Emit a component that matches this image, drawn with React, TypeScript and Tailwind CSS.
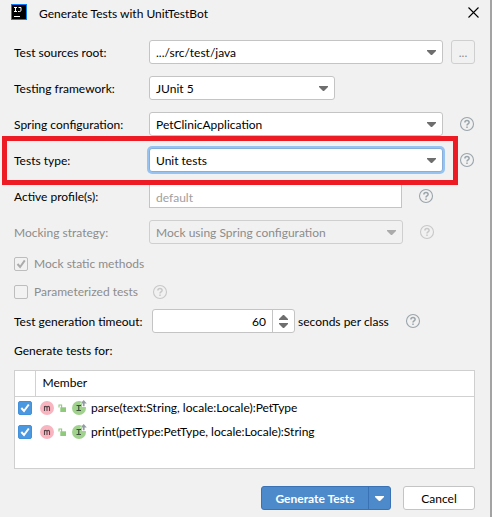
import type { ReactNode } from 'react';
import clsx from 'clsx';

function Arrow({ className }: { className?: string }) {
  return (
    <svg viewBox="0 0 9 5" className={clsx('h-[5px] w-[9px]', className)} fill="currentColor" aria-hidden="true">
      <path d="M0 0h9v1L5 5H4L0 1z" />
    </svg>
  );
}

function Help({ label, muted, className }: { label: string; muted?: boolean; className?: string }) {
  return (
    <button
      type="button"
      aria-label={label}
      className={clsx('size-[14px] shrink-0', muted ? 'text-[#c8c8c8]' : 'text-[#9aa5ab]', className)}
    >
      <svg viewBox="0 0 14 14" className="size-[14px] overflow-visible" fill="none" stroke="currentColor" aria-hidden="true">
        <circle cx="7" cy="7" r="6.5" strokeWidth="1.1" />
        <path d="M4.9 5.6C4.9 4.3 5.8 3.6 7 3.6s2.1.7 2.1 1.8c0 1.5-2.1 1.5-2.1 3.1" strokeWidth="1.5" />
        <path d="M7 9.4v1.5" strokeWidth="1.5" />
      </svg>
    </button>
  );
}

interface ComboProps {
  id: string;
  value: string;
  width: string;
  focused?: boolean;
  disabled?: boolean;
}

function Combo({ id, value, width, focused, disabled }: ComboProps) {
  return (
    <div className={clsx('relative', width)}>
      <select
        id={id}
        disabled={disabled}
        className={clsx(
          'block h-6 w-full appearance-none rounded-[3px] border pt-0.5 pr-6 pl-[6px] opacity-100 outline-none',
          disabled ? 'border-[#cfcfcf] bg-[#f1f1f1] text-[#8c8c8c]' : 'bg-white text-black',
          !disabled && (focused ? 'border-[#87afda] ring-2 ring-[#97c3f3]' : 'border-[#c4c4c4]'),
        )}
      >
        <option>{value}</option>
      </select>
      <Arrow
        className={clsx(
          'pointer-events-none absolute top-[10px] right-[7px]',
          disabled ? 'text-[#ababab]' : 'text-[#6e6e6e]',
        )}
      />
    </div>
  );
}

function Field({ id, label, muted, children }: { id: string; label: string; muted?: boolean; children: ReactNode }) {
  return (
    <div className="flex h-6 items-center">
      <label htmlFor={id} className={clsx('w-[135px] shrink-0 pt-0.5', muted && 'text-[#8c8c8c]')}>
        {label}
      </label>
      {children}
    </div>
  );
}

function Option({ label, checked, children }: { label: string; checked?: boolean; children?: ReactNode }) {
  return (
    <div className="flex h-5 items-center">
      <label className="flex items-center gap-[6px] text-[#8c8c8c]">
        <span className="relative size-[14px]">
          <input
            type="checkbox"
            disabled
            defaultChecked={checked}
            className="block size-[14px] appearance-none rounded-[2px] border border-[#bdbdbd] bg-[#f2f2f2]"
          />
          {checked && (
            <svg viewBox="0 0 14 14" className="pointer-events-none absolute inset-0" fill="none" stroke="#ababab" strokeWidth="2" aria-hidden="true">
              <path d="M3.5 7l2.6 3L10.8 3.4" />
            </svg>
          )}
        </span>
        {label}
      </label>
      {children}
    </div>
  );
}

function MemberIcons() {
  return (
    <svg viewBox="0 0 48 18" className="h-[18px] w-12 shrink-0" aria-hidden="true">
      <circle cx="7" cy="9" r="7" fill="#f8b5c0" />
      <path d="M4.500 12V7M4.500 8.600C4.500 7 7 7 7 8.600V12M7 8.600c0-1.600 2.500-1.600 2.500 0V12" fill="none" stroke="#5a444a" strokeWidth="1.100" />
      <path d="M20.300 8.300H26V13h-5.700z" fill="#8fca7c" />
      <path d="M19 8.500V6h2.600v3" fill="none" stroke="#8fca7c" strokeWidth="1.100" />
      <circle cx="39" cy="9" r="7" fill="#a0d28e" />
      <path d="M43.700 0L48 4v4h-6V5h-2z" fill="#fff" />
      <path d="M36.500 6.500h4.500M38.750 6.500v5M36.500 11.500h4.500" fill="none" stroke="#3e4f39" strokeWidth="1.200" />
      <path d="M42.800 7.200V4.500h-2.200l3.100-3.500 3.100 3.500h-2.200v2.700z" fill="#939ca3" />
    </svg>
  );
}

function Tick({ label, defaultChecked }: { label: string; defaultChecked: boolean }) {
  return (
    <span className="relative block size-[14px]">
      <input
        type="checkbox"
        aria-label={label}
        defaultChecked={defaultChecked}
        className="peer block size-[14px] appearance-none rounded-[2px] border border-[#bdbdbd] checked:border-[#4290db] checked:bg-[#4a98e0]"
      />
      <svg viewBox="0 0 14 14" className="pointer-events-none absolute inset-0 hidden peer-checked:block" fill="none" stroke="#fff" strokeWidth="2" aria-hidden="true">
        <path d="M3.300 7l2.700 3L10.800 3.500" />
      </svg>
    </span>
  );
}

const members = ['parse(text:String, locale:Locale):PetType', 'print(petType:PetType, locale:Locale):String'];

export default function App() {
  return (
    <main className="border-r-2 border-[#a3a3a3] bg-[#f1f1f1] pr-[15px] pb-[7px] pl-[14px] font-[Lato,'Open_Sans',sans-serif] text-[12px] leading-4 text-black">
      <header className="flex h-7 items-center">
        <svg viewBox="0 0 16 16" className="-mt-1 -ml-[3px] size-4" aria-hidden="true">
          <path d="M0 0h16v16H0z" fill="#087cfa" />
          <path d="M1 1h14v14H1z" fill="#000" />
          <path d="M3 3.500h3M4.500 3.500v4M3 7.500h3M7.500 3.500h2.500v2.700q0 1.300-1.300 1.300H7" fill="none" stroke="#fff" />
          <path d="M3 12h6v1H3z" fill="#fff" />
        </svg>
        <h1 className="ml-3 flex-1">Generate Tests with UnitTestBot</h1>
        <button type="button" aria-label="Close" className="-mt-1 -mr-[12px] p-[8px]">
          <svg viewBox="0 0 11 11" className="size-[11px]" stroke="#000" strokeWidth="1.100" aria-hidden="true">
            <path d="M.5.5l10 10M10.500.5l-10 10" />
          </svg>
        </button>
      </header>

      <form className="pt-3">
        <div className="flex flex-col gap-3">
          <Field id="root-dir" label="Test sources root:">
            <Combo id="root-dir" value=".../src/test/java" width="flex-1" />
            <button type="button" aria-label="Browse" className="ml-2 size-6 rounded-[3px] border border-[#cfcfcf] pt-0.5 text-[#8c8c8c]">
              ...
            </button>
          </Field>
          <Field id="framework" label="Testing framework:">
            <Combo id="framework" value="JUnit 5" width="w-[186px]" />
          </Field>
          <Field id="spring" label="Spring configuration:">
            <Combo id="spring" value="PetClinicApplication" width="flex-1" />
            <Help label="Spring configuration help" className="mr-[1px] ml-[17px]" />
          </Field>
          <div className="relative">
            <Field id="type" label="Tests type:">
              <Combo id="type" value="Unit tests" width="flex-1" focused />
              <Help label="Tests type help" className="mr-[1px] ml-[17px]" />
            </Field>
            <div className="pointer-events-none absolute -top-3 right-[17px] -bottom-[13px] -left-3 z-10 border-[5px] border-[#ed1c24]" />
          </div>
          <Field id="profiles" label="Active profile(s):">
            <input
              id="profiles"
              type="text"
              placeholder="default"
              className="h-6 w-[253px] border border-[#c4c4c4] bg-white px-[6px] pt-0.5 outline-none placeholder:text-[#a0a0a0]"
            />
            <Help label="Active profiles help" className="ml-[17px]" />
          </Field>
          <Field id="mocking" label="Mocking strategy:" muted>
            <Combo id="mocking" value="Mock using Spring configuration" width="w-[254px]" disabled />
            <Help label="Mocking strategy help" muted className="ml-[17px]" />
          </Field>
        </div>

        <div className="mt-[10px] flex flex-col gap-2">
          <Option label="Mock static methods" checked />
          <Option label="Parameterized tests">
            <Help label="Parameterized tests help" muted className="ml-[15px]" />
          </Option>
        </div>

        <div className="mt-[7px] flex h-6 items-center">
          <label htmlFor="timeout" className="w-[138px] shrink-0 pt-0.5 whitespace-nowrap">
            Test generation timeout:
          </label>
          <div className="flex h-6 w-[143px] rounded-[3px] border border-[#c4c4c4] bg-white">
            <input id="timeout" type="text" inputMode="numeric" defaultValue="60" className="min-w-0 flex-1 pt-0.5 pr-[6px] text-right outline-none" />
            <div className="flex w-[22px] flex-col items-center justify-center gap-[3px] border-l border-[#c4c4c4] text-[#6e6e6e]">
              <button type="button" aria-label="Increase"><Arrow className="block rotate-180" /></button>
              <button type="button" aria-label="Decrease"><Arrow className="block" /></button>
            </div>
          </div>
          <span className="ml-[3px] pt-0.5">seconds per class</span>
          <Help label="Timeout help" className="ml-[17px]" />
        </div>

        <h2 className="mt-2 leading-5">Generate tests for:</h2>

        <div className="mt-[9px] h-[99px] border border-[#cfcfcf] bg-white">
          <table className="w-full border-collapse text-left">
            <thead>
              <tr className="h-[25px] border-b border-[#d1d1d1]">
                <th className="w-5 border-r border-[#d1d1d1] p-0" aria-label="Selected" />
                <th className="p-0 pl-[7px] font-normal">Member</th>
              </tr>
            </thead>
            <tbody>
              {members.map((member) => (
                <tr key={member} className="h-6">
                  <td className="p-0 pl-[3px]">
                    <Tick label={member} defaultChecked />
                  </td>
                  <td className="p-0 pl-[5px]">
                    <span className="flex items-center gap-[3px]">
                      <MemberIcons />
                      {member}
                    </span>
                  </td>
                </tr>
              ))}
            </tbody>
          </table>
        </div>

        <div className="mt-[17px] flex justify-end gap-3">
          <div className="flex h-6 w-[130px] rounded-[3px] border border-[#3a73b5] bg-[#4c8acb] text-white">
            <button type="button" className="flex-1 pt-0.5 font-bold whitespace-nowrap">Generate Tests</button>
            <button type="button" aria-label="More actions" className="flex w-[22px] items-center justify-center border-l border-[#3a73b5]">
              <Arrow />
            </button>
          </div>
          <button type="button" className="h-6 w-[72px] rounded-[3px] border border-[#c4c4c4] bg-white pt-0.5">Cancel</button>
        </div>
      </form>
    </main>
  );
}
